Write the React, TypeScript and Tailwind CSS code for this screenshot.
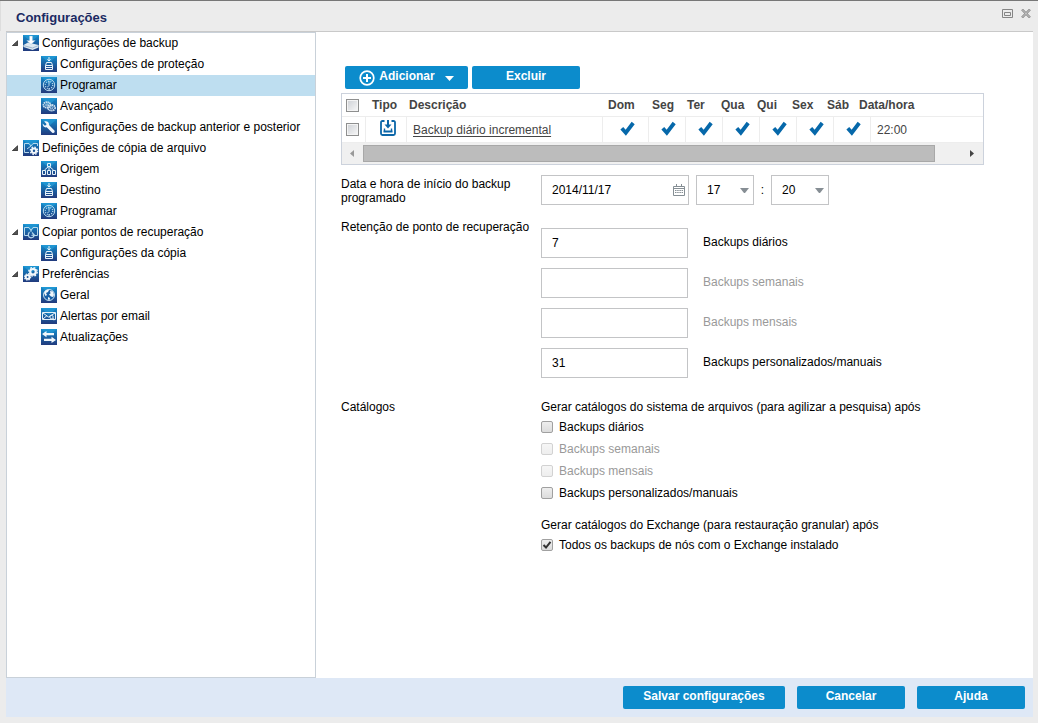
import { useState } from "react";
import type { ReactNode } from "react";

type IconName =
  | "disk" | "drive" | "clock" | "gears" | "wrench" | "archive" | "network"
  | "restore" | "cogs" | "globe" | "mail" | "arrows";

const glyphs: Record<IconName, ReactNode> = {
  disk: (
    <>
      <path d="M.500 10 5 7.500 15.500 10v2.500L9.500 15 .500 12z" fill="#dfe9f1" />
      <path d="M.500 10.500 9.500 13l6-2.500" fill="none" stroke="#8fabc6" strokeWidth=".8" />
      <path d="M6.500 1h3v4.500h2.800L8 9.500 3.700 5.500h2.800z" fill="#fff" stroke="#8eb9d8" strokeWidth=".4" />
    </>
  ),
  drive: (
    <g fill="none" stroke="#e8f3fa" strokeWidth="1">
      <path d="M4.500 13.500v-4l1-3h5l1 3v4zM4.500 9.500h7M4.500 11.500h7" />
      <path d="M8 1v4M6.500 3.300 8 5 9.500 3.300" />
    </g>
  ),
  clock: (
    <g fill="none" stroke="#b9d9ee">
      <circle cx="8" cy="8" r="5.700" strokeWidth="1" />
      <circle cx="8" cy="8" r="3.700" strokeWidth="1.300" strokeDasharray="1 1.300" />
      <path d="M8 4v4.500M8 8.500 6.500 10M8 11v2" strokeWidth="1" />
    </g>
  ),
  gears: (
    <g fill="none" stroke="#cfe3f1">
      <ellipse cx="6" cy="7" rx="3.600" ry="2.800" strokeWidth="1.800" strokeDasharray="1.400 .5" />
      <ellipse cx="6" cy="7" rx="1.500" ry="1" strokeWidth=".8" />
      <ellipse cx="10.500" cy="9.800" rx="3.600" ry="2.800" strokeWidth="1.800" strokeDasharray="1.400 .5" />
      <ellipse cx="10.500" cy="9.800" rx="1.500" ry="1" strokeWidth=".8" />
    </g>
  ),
  wrench: (
    <path d="M3.200 2.500 5.500 5 5 6.300 3.500 6.500 1.700 4.500C1.500 7 3 8.800 5.700 8.300l5.500 5.500c1.500 1 3.200-.7 2.200-2.200L8 6C8.400 3.500 6 1.500 3.200 2.500z" fill="#f3f8fc" />
  ),
  archive: (
    <>
      <path d="M6 3.500H1.500v9H6M10 3.500h4.500V6M6 3.500 8 6l2-2.500M4 9l4-3" fill="none" stroke="#b6d8ec" />
      <circle cx="11" cy="10.800" r="2.200" fill="none" stroke="#f2f7fb" strokeWidth="2" />
      <circle cx="11" cy="10.800" r="3.700" fill="none" stroke="#f2f7fb" strokeWidth="1.300" strokeDasharray="1.500 1.400" />
    </>
  ),
  network: (
    <g fill="none" stroke="#e5f1f9">
      <path d="M6.500 2.500h3v3h-3zM1.500 9.500h3v4h-3zM6.500 9.500h3v4h-3zM11.500 9.500h3v4h-3z" />
      <path d="M8 5.500v4M7 6 3.500 9M9 6l3.500 3" />
    </g>
  ),
  restore: (
    <g fill="none" stroke="#b6d8ec">
      <path d="M6 3.500H1.500v8H5M10 3.500h4.500v8H11M6 3.500l2 3 2-3M8 5v3" />
      <path d="M6.500 8C4.500 10 5 13.500 8 13.800c2 0 3-1.300 3.200-2.800M9 8.500l2 2.200-2.500.8" strokeWidth="1.200" />
    </g>
  ),
  cogs: (
    <g fill="none" stroke="#f4f8fb">
      <circle cx="10" cy="5.800" r="2.800" strokeWidth="2.200" />
      <circle cx="10" cy="5.800" r="4.300" strokeWidth="1.300" strokeDasharray="1.800 1.580" />
      <circle cx="4.600" cy="11" r="1.900" strokeWidth="1.900" />
      <circle cx="4.600" cy="11" r="3.100" strokeWidth="1.100" strokeDasharray="1.400 1.030" />
    </g>
  ),
  globe: (
    <>
      <circle cx="8" cy="8" r="5.500" fill="#1660a7" stroke="#c9e1f0" />
      <path d="M3 6C4 3 6 2.500 8 3L7 5 5 6 6 8 4.500 9zM9 4l3 .500 1 3.500-1 2-2-.5-2-2 1.500-1zM7 10l2 1-.5 2-1.500-.5z" fill="#eff6fa" />
    </>
  ),
  mail: (
    <g fill="none" stroke="#e4f0f8">
      <path d="M1.500 4.500h13v7h-13zM2 5l5.500 4L14 5M2 11l4-3.500" />
      <circle cx="10.500" cy="9" r="1.700" />
      <path d="m12 10.500 1.500 1.500" strokeWidth="1.500" />
    </g>
  ),
  arrows: (
    <path d="M5.500 2v2H13v2.200H5.500v2L1 5.100zM10.500 7.800v2H3V12h7.500v2L15 10.900z" fill="#f2f8fc" />
  ),
};

function TreeIcon({ name }: { name: IconName }) {
  return (
    <svg viewBox="0 0 16 16" className="size-4 shrink-0" aria-hidden="true">
      <defs>
        <linearGradient id="tile" x1="0" y1="0" x2="0" y2="1">
          <stop offset="0" stopColor="#148bcb" />
          <stop offset="1" stopColor="#213a7d" />
        </linearGradient>
      </defs>
      <rect width="16" height="16" fill="url(#tile)" />
      <path d="M0 0h16L8 7z" fill="#29a5df" opacity=".5" />
      {glyphs[name]}
    </svg>
  );
}

const tree: { id: string; label: string; icon: IconName; parent?: boolean }[] = [
  { id: "backup", label: "Configurações de backup", icon: "disk", parent: true },
  { id: "protection", label: "Configurações de proteção", icon: "drive" },
  { id: "schedule", label: "Programar", icon: "clock" },
  { id: "advanced", label: "Avançado", icon: "gears" },
  { id: "prepost", label: "Configurações de backup anterior e posterior", icon: "wrench" },
  { id: "filecopy", label: "Definições de cópia de arquivo", icon: "archive", parent: true },
  { id: "source", label: "Origem", icon: "network" },
  { id: "destination", label: "Destino", icon: "drive" },
  { id: "copyschedule", label: "Programar", icon: "clock" },
  { id: "points", label: "Copiar pontos de recuperação", icon: "restore", parent: true },
  { id: "copysettings", label: "Configurações da cópia", icon: "drive" },
  { id: "preferences", label: "Preferências", icon: "cogs", parent: true },
  { id: "general", label: "Geral", icon: "globe" },
  { id: "email", label: "Alertas por email", icon: "mail" },
  { id: "updates", label: "Atualizações", icon: "arrows" },
];

const days = ["Dom", "Seg", "Ter", "Qua", "Qui", "Sex", "Sáb"];

const buttonClass =
  "flex items-center justify-center rounded-[2px] bg-[#0c8ccc] pb-[3px] font-bold text-white hover:bg-[#0a7db8]";

function SquareCheckbox({ label }: { label: string }) {
  return (
    <input
      type="checkbox"
      aria-label={label}
      className="block size-[13px] appearance-none border border-[#8e8f8f] bg-linear-to-br from-[#cdd0d5] to-[#f8f8f8] shadow-[inset_0_0_0_1px_#f4f4f4] checked:bg-[#0c6fb0] checked:bg-none"
    />
  );
}

function CatalogOption({ label, disabled, checked }: { label: string; disabled?: boolean; checked?: boolean }) {
  const [on, setOn] = useState(Boolean(checked));
  return (
    <label className={`flex h-[22px] items-center gap-1.5 ${disabled ? "text-[#999]" : ""}`}>
      <span className="relative size-3 shrink-0">
        <input
          type="checkbox"
          checked={on}
          disabled={disabled}
          onChange={(e) => setOn(e.target.checked)}
          className="block size-3 appearance-none rounded-[2px] border border-[#a0a0a0] bg-linear-to-b from-[#eee] to-[#dcdcdc] disabled:border-[#d2d2d2] disabled:from-[#f6f6f6] disabled:to-[#eee]"
        />
        {on && (
          <svg viewBox="0 0 12 12" className="pointer-events-none absolute inset-0 size-3" aria-hidden="true">
            <path d="M2.500 6 5 8.500 9.500 2.800" fill="none" stroke="#333" strokeWidth="2" />
          </svg>
        )}
      </span>
      {label}
    </label>
  );
}

function TimeSelect({ label, value, count }: { label: string; value: string; count: number }) {
  return (
    <span className="relative block">
      <select
        aria-label={label}
        defaultValue={value}
        className="block h-[30px] w-[58px] appearance-none border border-[#c3c4c6] bg-white pl-2.5"
      >
        {Array.from({ length: count }, (_, i) => (
          <option key={i}>{String(i).padStart(2, "0")}</option>
        ))}
      </select>
      <svg viewBox="0 0 9 5" className="pointer-events-none absolute top-[13px] right-[5px] h-[5px] w-[9px]" aria-hidden="true">
        <path d="M0 0h9L5 5H4z" fill="#868e94" />
      </svg>
    </span>
  );
}

const retention = [
  { id: "daily", label: "Backups diários", value: "7", disabled: false },
  { id: "weekly", label: "Backups semanais", value: "", disabled: true },
  { id: "monthly", label: "Backups mensais", value: "", disabled: true },
  { id: "manual", label: "Backups personalizados/manuais", value: "31", disabled: false },
];

export default function App() {
  const [selected, setSelected] = useState("schedule");

  return (
    <div className="flex min-h-screen flex-col border-t border-[#777] bg-[#ececec] pb-1.5 font-['Liberation_Sans',Arial,sans-serif] text-xs text-black">
      <header className="flex h-[30px] shrink-0 items-center justify-between border-l border-[#ddd] pr-[7px] pl-[15px]">
        <h1 className="pt-1 text-[13px] font-bold text-[#1b2a63]">Configurações</h1>
        <div className="flex gap-2 pb-1.5">
          <button type="button" aria-label="Maximizar">
            <svg viewBox="0 0 11 9" className="h-[9px] w-[11px]" aria-hidden="true">
              <path d="M.500.500h10v8H.500zM2.500 3.500h6v3h-6z" fill="none" stroke="#858585" />
            </svg>
          </button>
          <button type="button" aria-label="Fechar">
            <svg viewBox="0 0 10 9" className="h-[9px] w-2.5" aria-hidden="true">
              <path d="m1 .5 8 8M9 .5l-8 8" fill="none" stroke="#858585" strokeWidth="2.400" />
              <path d="m1 .5 8 8M9 .5l-8 8" fill="none" stroke="#e4e4e4" strokeWidth=".8" />
            </svg>
          </button>
        </div>
      </header>

      <div className="mr-[5px] ml-1.5 flex flex-1 flex-col border-t border-[#c9c9c9]">
        <div className="flex flex-1">
          <nav className="w-[310px] shrink-0 border border-[#c9d1d9] bg-white">
            <ul>
              {tree.map((item) => (
                <li key={item.id}>
                  <button
                    type="button"
                    onClick={() => setSelected(item.id)}
                    className={`flex h-[21px] w-full items-center gap-[3px] pb-px whitespace-nowrap ${item.parent ? "pl-[5px]" : "pl-[34px]"} ${selected === item.id ? "bg-[#bedef0]" : ""}`}
                  >
                    {item.parent && (
                      <svg viewBox="0 0 8 8" className="mr-0.5 size-1.5 shrink-0" aria-hidden="true">
                        <path d="M7.500 1v6.500H.500z" fill="#555" stroke="#222" />
                      </svg>
                    )}
                    <TreeIcon name={item.icon} />
                    {item.label}
                  </button>
                </li>
              ))}
            </ul>
          </nav>

          <main className="min-w-0 flex-1 bg-white pt-[34px] pr-[49px] pb-6 pl-[25px]">
            <div className="flex gap-1 pb-1 pl-1">
              <button type="button" className={`${buttonClass} h-[23px] w-[123px]`}>
                <svg viewBox="0 0 16 16" className="mt-1 mr-1 size-4" fill="none" stroke="#fff" strokeWidth="1.700" aria-hidden="true">
                  <circle cx="8" cy="8" r="6.800" />
                  <path d="M8 4v8M4 8h8" strokeWidth="2" />
                </svg>
                Adicionar
                <svg viewBox="0 0 9 5" className="mt-1 ml-2.5 h-[5px] w-[9px]" aria-hidden="true">
                  <path d="M0 0h9L4.500 5z" fill="#fff" />
                </svg>
              </button>
              <button type="button" className={`${buttonClass} h-[23px] w-[108px]`}>Excluir</button>
            </div>

            <div className="border border-[#ccd2dc] text-[#444]">
              <table className="block">
                <thead className="block">
                  <tr className="grid h-[22px] grid-cols-[27px_37px_199px_44px_35px_34px_36px_35px_35px_32px_1fr] items-center text-left">
                    <th className="pl-1"><SquareCheckbox label="Selecionar todos" /></th>
                    <th className="pl-[3px]">Tipo</th>
                    <th className="pl-[3px]">Descrição</th>
                    {days.map((d) => (
                      <th key={d} className="pl-[3px]">{d}</th>
                    ))}
                    <th className="pl-[3px]">Data/hora</th>
                  </tr>
                </thead>
                <tbody className="block">
                  <tr className="grid h-[27px] grid-cols-[24px_41px_196px_46px_37px_37px_37px_37px_37px_37px_1fr] border-y border-[#ededed]">
                    <td className="flex items-center border-r border-[#ededed] pl-1">
                      <SquareCheckbox label="Selecionar Backup diário incremental" />
                    </td>
                    <td className="flex justify-center border-r border-[#ededed] pt-[3px] pl-1">
                      <svg viewBox="0 0 16 16" className="size-4" fill="none" stroke="#0b66a8" aria-hidden="true">
                        <path d="M4.500 1H2.500Q1 1 1 2.500v11Q1 15 2.500 15h11q1.500 0 1.500-1.500v-11Q15 1 13.500 1h-2" strokeWidth="1.800" />
                        <path d="M8 0v6" strokeWidth="2" />
                        <path d="M4.500 4.500h7L8 8.500z" fill="#0b66a8" stroke="none" />
                        <path d="M3.500 11.500h9" strokeWidth="2" />
                        <path d="M4.500 8.500v3M11.500 8.500v3" strokeWidth="1.400" />
                      </svg>
                    </td>
                    <td className="flex items-center border-r border-[#ededed] pl-1.5">
                      <a href="#backup" className="underline underline-offset-2">Backup diário incremental</a>
                    </td>
                    {days.map((d) => (
                      <td key={d} className="flex justify-center border-r border-[#ededed] pt-1 pl-[3px]">
                        <svg viewBox="0 0 15 15" className="size-[15px]" role="img" aria-label="Sim">
                          <path d="m1.800 7.200 4 4.500L13.200 2" fill="none" stroke="#0668aa" strokeWidth="3.800" />
                        </svg>
                      </td>
                    ))}
                    <td className="flex items-center pl-1.5">22:00</td>
                  </tr>
                </tbody>
              </table>
              <div className="flex h-[21px] items-center bg-[#f0f0f0] px-2" aria-hidden="true">
                <svg viewBox="0 0 4 7" className="h-[7px] w-1"><path d="M4 0v7L0 3.500z" fill="#999" /></svg>
                <div className="ml-[9px] h-[17px] min-w-0 flex-1 border border-[#a8a8a8] bg-[#bcbcbc]" />
                <svg viewBox="0 0 4 7" className="mr-px ml-[35px] h-[7px] w-1"><path d="M0 0v7l4-3.500z" fill="#444" /></svg>
              </div>
            </div>

            <div className="grid grid-cols-[200px_minmax(0,1fr)] pt-2.5">
              <label htmlFor="start-date" className="w-[185px] pt-0.5 leading-[14px]">
                Data e hora de início do backup programado
              </label>
              <div className="flex items-center">
                <span className="relative mr-[7px] block">
                  <input id="start-date" defaultValue="2014/11/17" className="block h-[30px] w-[148px] border border-[#c3c4c6] bg-white pr-6 pl-2.5" />
                  <svg viewBox="0 0 12 12" className="pointer-events-none absolute top-[9px] right-1 size-3" fill="none" stroke="#858e94" aria-hidden="true">
                    <path d="M.500 2.500h11v9H.500zM.500 4.500h11M3.500 0v3M8.500 0v3" />
                    <path d="M2 6.500h8M2 8.500h8" strokeDasharray="1.500 .7" />
                  </svg>
                </span>
                <TimeSelect label="Hora" value="17" count={24} />
                <span className="w-[17px] text-center">:</span>
                <TimeSelect label="Minuto" value="20" count={60} />
              </div>
            </div>

            <div role="group" aria-labelledby="retention" className="grid grid-cols-[200px_minmax(0,1fr)] pt-[15px]">
              <h2 id="retention" className="whitespace-nowrap leading-[14px]">Retenção de ponto de recuperação</h2>
              <div className="flex flex-col gap-2.5 pt-2">
                {retention.map((r) => (
                  <div key={r.id} className="flex items-center gap-[15px]">
                    <input
                      id={r.id}
                      defaultValue={r.value}
                      disabled={r.disabled}
                      className="block h-[30px] w-[147px] border border-[#c3c4c6] bg-white px-2.5"
                    />
                    <label htmlFor={r.id} className={`pb-0.5 ${r.disabled ? "text-[#999]" : ""}`}>{r.label}</label>
                  </div>
                ))}
              </div>
            </div>

            <div className="grid grid-cols-[200px_minmax(0,1fr)] pt-[22px]">
              <h2 className="leading-[14px]">Catálogos</h2>
              <div>
                <p className="pb-0.5 leading-[14px]">Gerar catálogos do sistema de arquivos (para agilizar a pesquisa) após</p>
                <CatalogOption label="Backups diários" />
                <CatalogOption label="Backups semanais" disabled />
                <CatalogOption label="Backups mensais" disabled />
                <CatalogOption label="Backups personalizados/manuais" />
                <p className="pt-3.5 pb-0.5 leading-[14px]">Gerar catálogos do Exchange (para restauração granular) após</p>
                <CatalogOption label="Todos os backups de nós com o Exchange instalado" checked />
              </div>
            </div>
          </main>
        </div>

        <footer className="flex items-start justify-end gap-3 bg-[#dee8f6] px-2 py-2">
          <button type="button" className={`${buttonClass} h-[23px] w-[162px]`}>Salvar configurações</button>
          <button type="button" className={`${buttonClass} h-[23px] w-[108px]`}>Cancelar</button>
          <button type="button" className={`${buttonClass} h-[23px] w-[108px]`}>Ajuda</button>
        </footer>
      </div>
    </div>
  );
}
